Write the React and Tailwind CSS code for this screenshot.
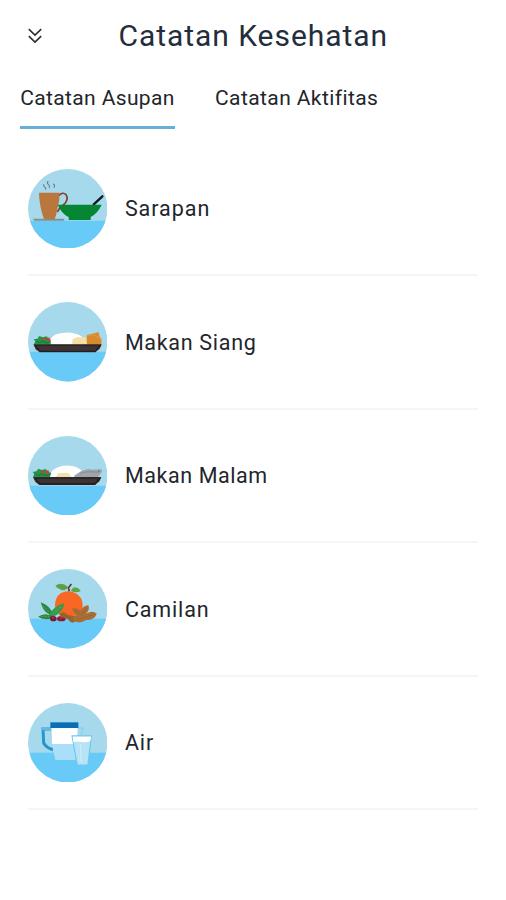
import React from "react";

// Round badge shared by every meal: sky above, table surface below.
function Badge({ id, horizon, children }) {
  return (
    <svg viewBox="23 25 238 238" className="h-[79.4px] w-[79.4px] shrink-0" aria-hidden="true">
      <clipPath id={id}>
        <circle cx="142" cy="144" r="119" />
      </clipPath>
      <g clipPath={`url(#${id})`}>
        <rect x="20" y="20" width="245" height="245" fill="#a7d9ec" />
        <rect x="20" y={horizon} width="245" height="120" fill="#67caf7" />
        {children}
      </g>
    </svg>
  );
}

function Breakfast() {
  return (
    <Badge id="breakfast" horizon={180}>
      <g fill="none" stroke="#6c7c85" strokeWidth="3.2" strokeLinecap="round">
        <path d="M71 72q-3 4 2 7t3 7M83 62q-4 5 1 9t3 10M99 70q6 4 2 10" />
      </g>
      <path d="M115 105Q127 92 137 102Q145 115 134 128Q128 134 121 137L111 154" fill="none" stroke="#873f2b" strokeWidth="5" />
      <path d="M37 174H133L129 180H43Z" fill="#8b8e90" />
      <path d="M56 96H117Q119 119 112 140Q109 160 103 176H71Q61 145 59 129Q56 112 56 96Z" fill="#b9773d" />
      <path d="M220 131L246 107" stroke="#15191b" strokeWidth="7" strokeLinecap="round" />
      <path d="M112 132H244Q232 158 211 169V178H145V170Q123 158 112 132Z" fill="#068633" />
    </Badge>
  );
}

function Salad() {
  return (
    <g>
      <path d="M41 151L45 143L40 137L51 135L57 127L67 131L79 128L86 137L94 139L108 144L109 153H42Z" fill="#249447" />
      <path d="M46 142L58 147L67 143L80 148L92 143" fill="none" stroke="#126a32" strokeWidth="2" />
      <path d="M64 134L75 132L76 139L68 140ZM79 135L87 131L90 141L82 143Z" fill="#d43c2d" />
      <circle cx="101" cy="148" r="5" fill="#45a94b" />
    </g>
  );
}

function Plate() {
  return (
    <g>
      <path d="M39 152H244L238 165L225 176H58L46 167Z" fill="#3e3334" />
      <path d="M43 154L60 173H224L241 154" fill="none" stroke="#211d20" strokeWidth="4" />
      <path d="M47 155H238" stroke="#292427" strokeWidth="4" />
    </g>
  );
}

function Lunch() {
  return (
    <Badge id="lunch" horizon={174}>
      <Salad />
      <path d="M91 153V137Q96 126 109 122Q136 112 165 120Q181 123 189 134V153Z" fill="#fff" />
      <path d="M195 153L200 124L222 119L234 115L238 129L243 135V153Z" fill="#d78b2d" />
      <path d="M203 126L222 124L242 136" fill="none" stroke="#e19a39" strokeWidth="3" />
      <path d="M155 153L157 136L169 131H198L200 153Z" fill="#f6dfa5" />
      <Plate />
    </Badge>
  );
}

function Dinner() {
  return (
    <Badge id="dinner" horizon={174}>
      <g transform="translate(-3 -4)">
        <Salad />
      </g>
      <path d="M89 148L94 131Q113 112 148 114Q174 115 190 135V149Z" fill="#fff" />
      <path d="M160 145L184 129L204 124L216 126L242 124L246 131L240 139L232 149H164Z" fill="#9fa5a8" />
      <path d="M179 137Q202 130 233 134" fill="none" stroke="#858c90" strokeWidth="3" />
      <circle cx="235" cy="131" r="2.5" fill="#687176" />
      <path d="M106 149L113 137L143 135L154 149Z" fill="#f3dfad" />
      <g transform="translate(-1 -4)">
        <Plate />
      </g>
    </Badge>
  );
}

function Snack() {
  return (
    <Badge id="snack" horizon={174}>
      <path d="M104 135Q104 110 121 98Q144 86 166 98Q187 109 187 134Q187 166 146 169Q106 168 104 135Z" fill="#f86723" />
      <path d="M147 92L144 82L153 70" fill="none" stroke="#613a2d" strokeWidth="5" />
      <path d="M105 75Q124 62 144 80Q129 95 118 85Q111 84 105 75ZM152 91Q157 76 170 81Q176 82 181 91Q168 99 152 91Z" fill="#5aa646" />
      <path d="M114 77L140 82" stroke="#4b963d" strokeWidth="1.5" />
      <path d="M61 125Q89 134 99 163Q70 162 61 125Z" fill="#278746" />
      <path d="M132 128Q99 134 81 172Q125 166 132 128Z" fill="#359a4b" />
      <path d="M53 168Q76 152 103 170Q77 182 53 168Z" fill="#35833e" />
      <path d="M69 137L87 155M121 139L94 163M64 167H91" stroke="#64a64c" strokeWidth="3.5" strokeDasharray="4 5" />
      <ellipse cx="99" cy="174" rx="10" ry="8" fill="#7f1837" />
      <ellipse cx="123" cy="174" rx="13" ry="8" fill="#911c32" />
      <path d="M95 171L101 172M119 171L125 173" stroke="#d96a6b" strokeWidth="2" />
      <path d="M117 161Q129 148 143 163L163 167Q175 181 157 186Q148 185 143 176L121 168Z" fill="#9a642d" />
      <path d="M156 142Q172 141 180 151Q187 136 204 134Q209 149 197 159Q219 147 229 160Q221 179 197 178Q180 190 162 182Q152 169 168 164Q157 157 156 142Z" fill="#a96e36" />
      <path d="M165 149L185 164M199 142L183 162M171 177L218 162M126 161L155 176" stroke="#8c5a2c" strokeWidth="2.5" strokeDasharray="4 4" />
    </Badge>
  );
}

function Water() {
  return (
    <Badge id="water" horizon={174}>
      <path d="M91 103H68L70 145Q78 160 98 165" fill="none" stroke="#2795d1" strokeWidth="9" />
      <path d="M92 98H63V107H92Z" fill="#62b9e5" />
      <path d="M173 100H189L181 120" fill="none" stroke="#80c8eb" strokeWidth="2.5" />
      <path d="M93 98H172L166 196H105L95 148Z" fill="#a9dff8" />
      <path d="M94 100H172L169 148H95Z" fill="#fff" />
      <rect x="90" y="83" width="84" height="17" fill="#086eb6" />
      <path d="M153 122H215L204 213H169Z" fill="#6fc7ef" />
      <path d="M157 125H211L201 209H172Z" fill="#b7e3f7" />
      <path d="M157 126H212L210 139Q199 144 184 142Q169 139 159 143Z" fill="#fff" />
      <path d="M180 148L183 202" stroke="#ccebf8" strokeWidth="4" />
    </Badge>
  );
}

const meals = [
  { name: "Sarapan", Icon: Breakfast, text: "tracking-[0.95px]" },
  { name: "Makan Siang", Icon: Lunch, text: "tracking-[0.7px]" },
  { name: "Makan Malam", Icon: Dinner, text: "tracking-[0.58px]" },
  { name: "Camilan", Icon: Snack, text: "tracking-[0.85px]" },
  { name: "Air", Icon: Water, text: "tracking-[0.9px]" },
];

export default function App() {
  return (
    <main className="h-[900px] w-full overflow-hidden bg-white font-['Roboto',sans-serif] text-[#22262b]">
      <header className="flex h-[72px] items-center pl-[28px]">
        <button aria-label="Tutup" className="w-[90.5px] shrink-0">
          <svg viewBox="0 0 14 16" className="h-4 w-3.5 fill-none stroke-[#292c31] stroke-[1.6]">
            <path d="M.8 1.2 7 7.1l6.2-5.9M.8 8.2 7 14.1l6.2-5.9" />
          </svg>
        </button>
        <h1 className="whitespace-nowrap text-[30px] leading-[40px] tracking-[0.95px] text-[#242d3c]">Catatan Kesehatan</h1>
      </header>
      <nav className="flex h-[57px] gap-[40px] pl-[20px] text-[21px] leading-[30px]">
        <button className="flex w-[155px] flex-col whitespace-nowrap border-b-[3px] border-[#67afd7] pt-[11px] tracking-[0.36px]">
          Catatan Asupan
        </button>
        <button className="flex flex-col whitespace-nowrap pt-[11px] tracking-[0.41px]">Catatan Aktifitas</button>
      </nav>
      <ul className="ml-[27.5px] mr-[28px] pt-[14px]">
        {meals.map(({ name, Icon, text }) => (
          <li key={name} className="flex h-[133.45px] items-center gap-[18px] border-b-2 border-[#f5f5f6]">
            <Icon />
            <span className={`pt-px text-[21.5px] leading-[30px] ${text}`}>{name}</span>
          </li>
        ))}
      </ul>
    </main>
  );
}
